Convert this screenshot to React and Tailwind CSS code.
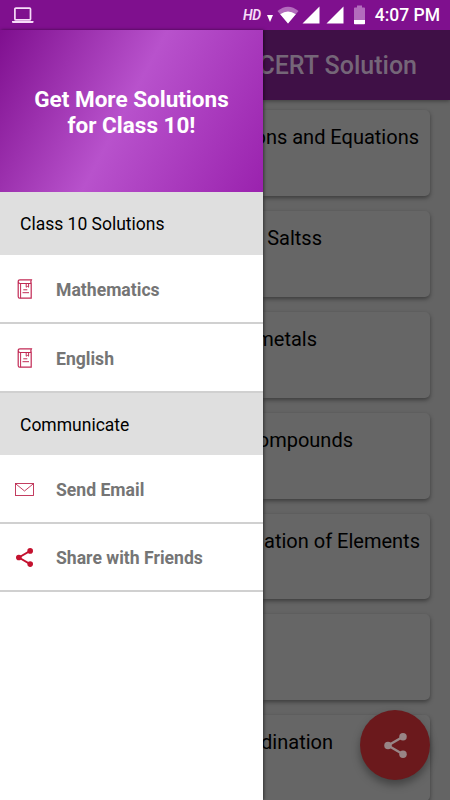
import React from "react";

const chapters = [
  { title: "ons and Equations", pad: "pr-[11px]" },
  { title: "Saltss", pad: "pr-[108px]" },
  { title: "metals", pad: "pr-[113px]" },
  { title: "ompounds", pad: "pr-[77px]" },
  { title: "ation of Elements", pad: "pr-[10px]" },
  { title: "", pad: "pr-[12px]" },
  { title: "dination", pad: "pr-[97px]" },
];

const LaptopIcon = () => (
  <svg width="22" height="17" viewBox="0 0 22 17" fill="none">
    <rect x="2.9" y="1.1" width="15.6" height="11.8" rx="1" stroke="#f6dcf8" strokeWidth="1.7" />
    <path d="M0 14h21.5v1.1q0 1-1 1H1q-1 0-1-1z" fill="#f6dcf8" />
  </svg>
);

const WifiIcon = () => (
  <svg width="22" height="18" viewBox="0 0 22 18">
    <path d="M0.5 5Q11 -3.5 21.5 5L11 17.5z" fill="#b36cbd" />
    <path d="M3.2 8.2Q11 2.6 18.8 8.2L11 17.5z" fill="#fff" />
  </svg>
);

const SignalIcon = () => (
  <svg width="18" height="18" viewBox="0 0 18 18">
    <path d="M0.5 17.5L17.5 0.5V17.5z" fill="#fff" />
  </svg>
);

const BatteryIcon = () => (
  <svg width="11" height="20" viewBox="0 0 11 20">
    <path d="M3 0.5h5v2h2.2q.8 0 .8.8V15H0V3.3q0-.8.8-.8H3z" fill="#b36cbd" />
    <path d="M0 15h11v3.4q0 .8-.8.8H.8q-.8 0-.8-.8z" fill="#fff" />
  </svg>
);

const BookIcon = () => (
  <svg width="16" height="20" viewBox="0 0 16 20" fill="none" stroke="#c22a55" strokeWidth="1">
    <path d="M14.2 4.5H3Q1.2 4.3 1.2 2.6 1.2 .8 3 .8h11.4q-.9 1.7-.2 3.7V19.2H2.6Q1.2 19.2 1.2 17.5V2.6" strokeWidth="1.2" />
    <path d="M3.6 4.5v14.7" />
    <path d="M9.2 4.5v3.7l1.2-.8 1.2.8V4.5" />
    <path d="M6.3 10.8h4M5.5 13.7h6.5" />
  </svg>
);

const MailIcon = () => (
  <svg width="19" height="13" viewBox="0 0 19 13" fill="none" stroke="#bd2950">
    <rect x="0.5" y="0.5" width="18" height="12" strokeWidth="0.9" />
    <path d="M0.7 .8L9.5 8 18.3 .8" strokeWidth="0.9" />
  </svg>
);

const ShareIcon = ({ className }) => (
  <svg className={className} viewBox="0 0 18 20" fill="currentColor">
    <path d="M15 3L3 10l12 7" fill="none" stroke="currentColor" strokeWidth="1.9" />
    <circle cx="15" cy="3" r="3" />
    <circle cx="3" cy="10" r="3" />
    <circle cx="15" cy="17" r="3" />
  </svg>
);

const StatusBar = () => (
  <header className="flex h-[30px] shrink-0 items-center bg-[#7f108e] pr-[10px] pl-[12px] text-white">
    <LaptopIcon />
    <div className="ml-auto flex items-center">
      <span className="text-[14px] leading-none font-semibold tracking-[-0.4px] italic text-[#f6dcf8]">HD</span>
      <svg className="mt-[7px] ml-[6px]" width="6" height="7" viewBox="0 0 6 7">
        <path d="M0 0h6L3 7z" fill="#fff" />
      </svg>
      <span className="ml-[4px]"><WifiIcon /></span>
      <span className="ml-[3px]"><SignalIcon /></span>
      <span className="ml-[6px]"><SignalIcon /></span>
      <span className="ml-[10px]"><BatteryIcon /></span>
      <span className="ml-[10px] pt-[2px] text-[17.5px] leading-none font-medium">4:07 PM</span>
    </div>
  </header>
);

const SectionTitle = ({ children, height }) => (
  <h2 className={`flex items-center bg-[#dfdfdf] pt-[2px] pl-[20px] text-[17.5px] text-black ${height}`}>
    {children}
  </h2>
);

const MenuItem = ({ icon, label, height }) => (
  <li className={`flex items-center border-b-2 border-[#d0d0d0] pt-px ${height}`}>
    <span className="flex w-[49px] shrink-0 justify-center">{icon}</span>
    <span className="ml-[7px] pt-[2px] text-[17.6px] font-bold whitespace-nowrap text-[#757575]">{label}</span>
  </li>
);

const Drawer = () => (
  <nav className="z-10 w-[263px] shrink-0 bg-white shadow-[1px_0_3px_rgba(0,0,0,0.5)]">
    <div className="flex h-[162px] items-center justify-center bg-[linear-gradient(118deg,#7f0f8f_0%,#b852cc_48%,#9a22ae_100%)] pt-[2px] text-center text-[22.5px] leading-[26px] font-bold text-white">
      <p>
        Get More Solutions
        <br />
        for Class 10!
      </p>
    </div>
    <SectionTitle height="h-[63px]">Class 10 Solutions</SectionTitle>
    <ul>
      <MenuItem icon={<BookIcon />} label="Mathematics" height="h-[69px]" />
      <MenuItem icon={<BookIcon />} label="English" height="h-[69px]" />
    </ul>
    <SectionTitle height="h-[62px]">Communicate</SectionTitle>
    <ul>
      <MenuItem icon={<MailIcon />} label="Send Email" height="h-[69px]" />
      <MenuItem
        icon={<ShareIcon className="h-[19px] w-[17px] text-[#c4122f]" />}
        label="Share with Friends"
        height="h-[68px]"
      />
    </ul>
  </nav>
);

export default function App() {
  return (
    <div className="relative flex h-[800px] w-[450px] flex-col overflow-hidden font-['Roboto',sans-serif]">
      <StatusBar />
      <div className="flex min-h-0 flex-1">
        <Drawer />
        <main className="flex min-w-0 flex-1 flex-col overflow-hidden bg-[#646464]">
          <div className="flex h-[70px] shrink-0 items-center justify-end bg-[#3f1046] pt-[2px] pr-[33px] shadow-[0_1px_4px_rgba(0,0,0,0.4)]">
            <h1 className="text-[25px] font-medium whitespace-nowrap text-[#756678]">CERT Solution</h1>
          </div>
          <div className="mt-[10px] mr-[20px] flex flex-col gap-[15px]">
            {chapters.map((item, index) => (
              <div
                key={index}
                className={`flex h-[85.9px] shrink-0 justify-end rounded-r-[5px] bg-[#666666] pt-[12px] shadow-[0_2px_4px_rgba(0,0,0,0.4)] ${item.pad}`}
              >
                <p className="text-[20px] leading-[30px] whitespace-nowrap text-black">{item.title}</p>
              </div>
            ))}
          </div>
        </main>
      </div>
      <button className="absolute top-[710px] left-[360px] flex size-[70px] items-center justify-center rounded-full bg-[#6b191c] text-[#988586] shadow-[0_5px_8px_rgba(0,0,0,0.35)]">
        <ShareIcon className="h-[25px] w-[23px]" />
      </button>
    </div>
  );
}
